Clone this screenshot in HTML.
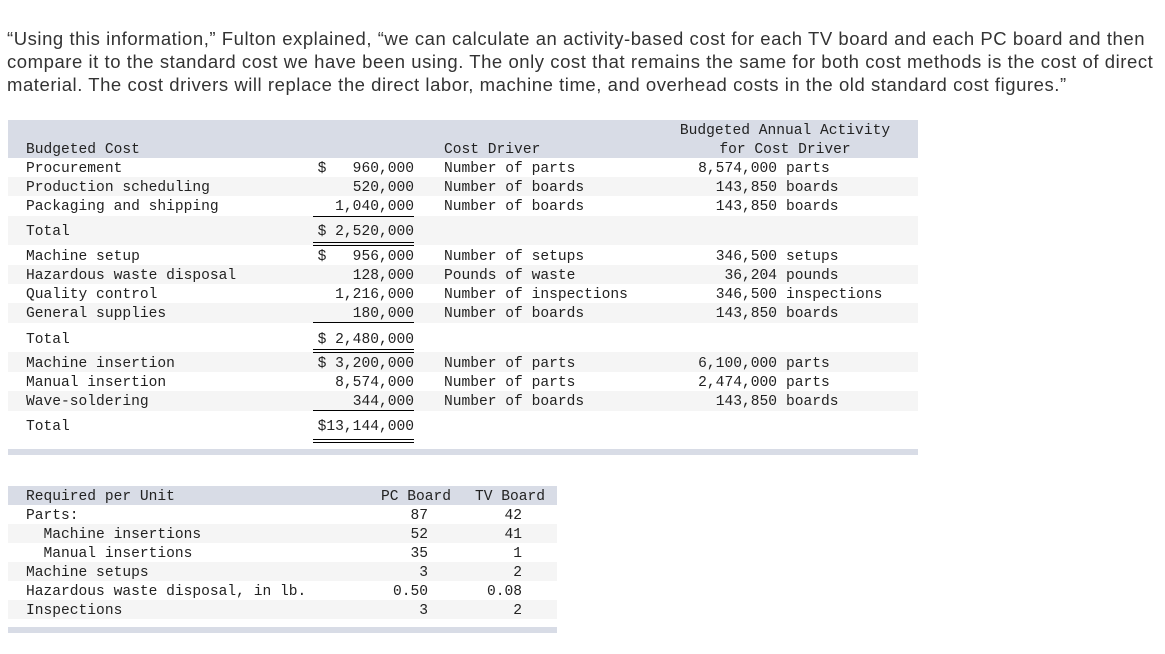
<!DOCTYPE html>
<html><head><meta charset="utf-8"><style>
*{margin:0;padding:0;box-sizing:border-box}
body{width:1165px;height:654px;background:#fff;position:relative;overflow:hidden;font-family:"Liberation Mono",monospace;font-size:14.6px;color:#222}
.p{position:absolute;left:7px;top:27px;white-space:nowrap;font-family:"Liberation Sans",sans-serif;font-size:18.5px;line-height:23px;color:#333;letter-spacing:0.55px}
.r{position:absolute;left:8px;height:20px}
.g{background:#f5f5f5}
.h{background:#d8dce6}
.t{position:absolute;white-space:pre;line-height:19px;margin-top:2px}
.rt{text-align:right}
.u{position:absolute;left:313px;width:101px;border-top:1.5px solid #000}
.d{position:absolute;left:313px;width:101px;height:4px;border-top:1.5px solid #000;border-bottom:1.5px solid #000}
</style></head><body>
<div class="p">“Using this information,” Fulton explained, “we can calculate an activity-based cost for each TV board and each PC board and then<br>compare it to the standard cost we have been using. The only cost that remains the same for both cost methods is the cost of direct<br>material. The cost drivers will replace the direct labor, machine time, and overhead costs in the old standard cost figures.”</div>

<div class="r h" style="top:120px;height:38px;width:910px"></div>
<div class="r g" style="top:177px;height:19px;width:910px"></div>
<div class="r g" style="top:216px;height:29px;width:910px"></div>
<div class="r g" style="top:265px;height:19px;width:910px"></div>
<div class="r g" style="top:303px;height:20px;width:910px"></div>
<div class="r g" style="top:352px;height:20px;width:910px"></div>
<div class="r g" style="top:391px;height:20px;width:910px"></div>
<div class="r h" style="top:449px;height:6px;width:910px"></div>

<div class="t" style="left:26px;top:139px">Budgeted Cost</div>
<div class="t" style="left:444px;top:139px">Cost Driver</div>
<div class="t" style="left:660px;width:250px;text-align:center;top:120px">Budgeted Annual Activity</div>
<div class="t" style="left:660px;width:250px;text-align:center;top:139px">for Cost Driver</div>

<div class="t" style="left:26px;top:158px">Procurement
Production scheduling
Packaging and shipping</div>
<div class="t" style="left:26px;top:221px">Total</div>
<div class="t" style="left:26px;top:246px">Machine setup
Hazardous waste disposal
Quality control
General supplies</div>
<div class="t" style="left:26px;top:329px">Total</div>
<div class="t" style="left:26px;top:353px">Machine insertion
Manual insertion
Wave-soldering</div>
<div class="t" style="left:26px;top:416px">Total</div>

<div class="t rt" style="left:300px;width:114px;top:158px">$   960,000
520,000
1,040,000</div>
<div class="t rt" style="left:300px;width:114px;top:221px">$ 2,520,000</div>
<div class="t rt" style="left:300px;width:114px;top:246px">$   956,000
128,000
1,216,000
180,000</div>
<div class="t rt" style="left:300px;width:114px;top:329px">$ 2,480,000</div>
<div class="t rt" style="left:300px;width:114px;top:353px">$ 3,200,000
8,574,000
344,000</div>
<div class="t rt" style="left:300px;width:114px;top:416px">$13,144,000</div>

<div class="u" style="top:216px"></div>
<div class="d" style="top:242px"></div>
<div class="u" style="top:322px"></div>
<div class="d" style="top:349px"></div>
<div class="u" style="top:410px"></div>
<div class="d" style="top:439px"></div>

<div class="t" style="left:444px;top:158px">Number of parts
Number of boards
Number of boards</div>
<div class="t" style="left:444px;top:246px">Number of setups
Pounds of waste
Number of inspections
Number of boards</div>
<div class="t" style="left:444px;top:353px">Number of parts
Number of parts
Number of boards</div>

<div class="t rt" style="left:640px;width:137px;top:158px">8,574,000
143,850
143,850</div>
<div class="t" style="left:786px;top:158px">parts
boards
boards</div>
<div class="t rt" style="left:640px;width:137px;top:246px">346,500
36,204
346,500
143,850</div>
<div class="t" style="left:786px;top:246px">setups
pounds
inspections
boards</div>
<div class="t rt" style="left:640px;width:137px;top:353px">6,100,000
2,474,000
143,850</div>
<div class="t" style="left:786px;top:353px">parts
parts
boards</div>

<div class="r h" style="top:486px;height:19px;width:549px"></div>
<div class="r g" style="top:524px;height:19px;width:549px"></div>
<div class="r g" style="top:562px;height:19px;width:549px"></div>
<div class="r g" style="top:600px;height:19px;width:549px"></div>
<div class="r h" style="top:627px;height:6px;width:549px"></div>

<div class="t" style="left:26px;top:486px">Required per Unit
Parts:
  Machine insertions
  Manual insertions
Machine setups
Hazardous waste disposal, in lb.
Inspections</div>
<div class="t" style="left:381px;top:486px">PC Board</div>
<div class="t" style="left:475px;top:486px">TV Board</div>
<div class="t rt" style="left:380px;width:48px;top:505px">87
52
35
3
0.50
3</div>
<div class="t rt" style="left:470px;width:52px;top:505px">42
41
1
2
0.08
2</div>
</body></html>
